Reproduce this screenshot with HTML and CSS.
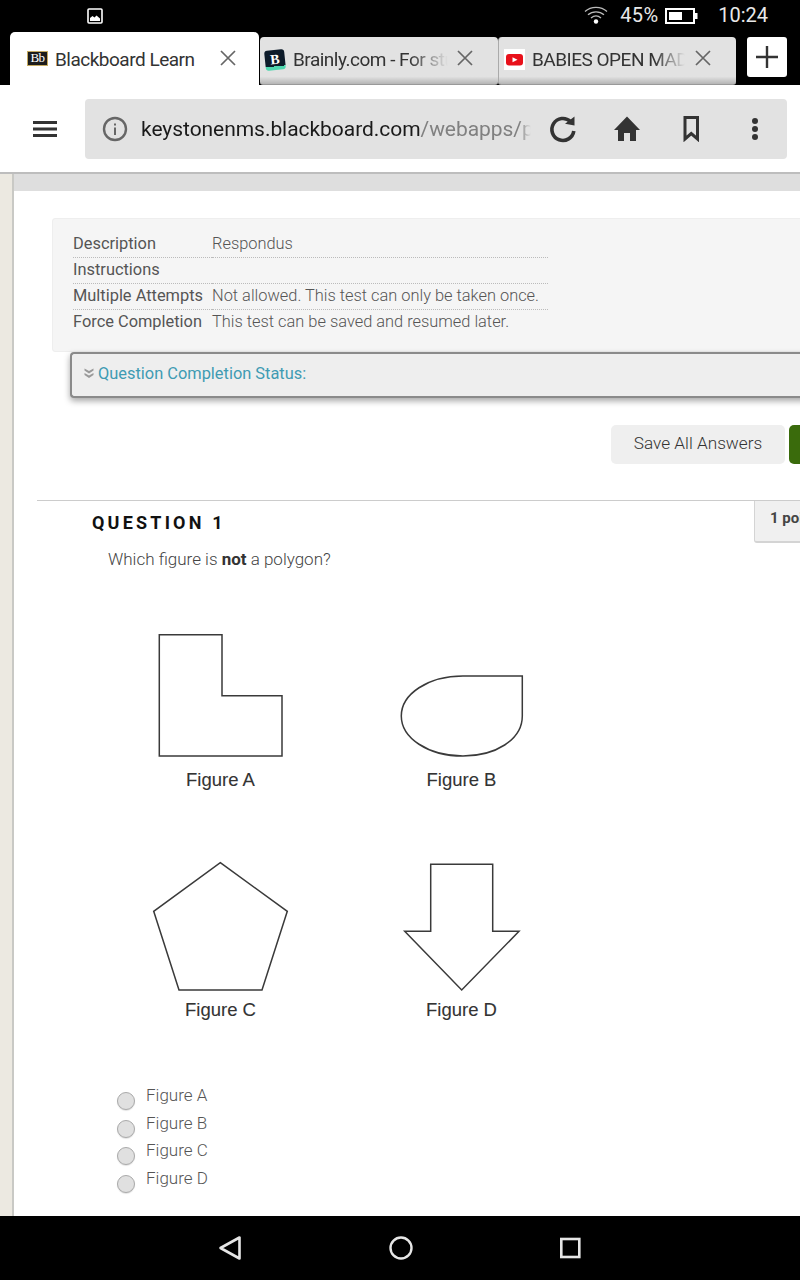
FILE: index.html
```html
<!DOCTYPE html>
<html lang="en">
<head>
<meta charset="utf-8">
<title>Blackboard Learn</title>
<link rel="stylesheet" href="styles.css">
</head>
<body>
<div class="screen">
  <header class="status">
    <svg class="status-img" width="16" height="16" viewBox="0 0 16 16"><rect x="1" y="1" width="14" height="14" rx="1" fill="none" stroke="#fff" stroke-width="1.6"/><path d="M3 13V10l2.500-2 2 1.500 2-2 3.500 3v2.500z" fill="#fff"/></svg>
    <svg class="status-wifi" width="24" height="20" viewBox="0 0 24 20" fill="none" stroke="#bbb" stroke-width="1.300"><path d="M1 6.500C7 1 17 1 23 6.500"/><path d="M4 9.800C8.500 5.800 15.500 5.800 20 9.800"/><path d="M7 13C10 10.500 14 10.500 17 13"/><circle cx="12" cy="16.500" r="2.200" fill="#fff" stroke="none"/></svg>
    <span class="status-pct">45%</span>
    <svg class="status-batt" width="33" height="16" viewBox="0 0 33 16"><rect x="1" y="1" width="28" height="14" fill="none" stroke="#fff" stroke-width="2"/><rect x="4" y="4" width="13" height="8" fill="#fff"/><rect x="30" y="5" width="2.500" height="6" fill="#fff"/></svg>
    <span class="status-time">10:24</span>
  </header>

  <nav class="tabs">
    <div class="tab tab-active">
      <span class="fav-bb">Bb</span>
      <span class="tab-title">Blackboard Learn</span>
      <svg class="tab-x" width="18" height="18" viewBox="0 0 18 18"><path d="M2 2l14 14M16 2L2 16" stroke="#666" stroke-width="1.700"/></svg>
    </div>
    <div class="tab tab-second">
      <span class="fav-br">B</span>
      <span class="tab-title tab-fade tab-fade-br">Brainly.com - For students</span>
      <svg class="tab-x" width="18" height="18" viewBox="0 0 18 18"><path d="M2 2l14 14M16 2L2 16" stroke="#666" stroke-width="1.700"/></svg>
    </div>
    <div class="tab tab-third">
      <svg class="fav-yt" width="21" height="21" viewBox="0 0 21 21"><rect width="21" height="21" fill="#fff"/><rect x="2" y="5" width="17" height="11.500" rx="3" fill="#e8101a"/><path d="M8.500 8.300l5 2.500-5 2.500z" fill="#fff"/></svg>
      <span class="tab-title tab-fade tab-fade-yt">BABIES OPEN MAD</span>
      <svg class="tab-x" width="18" height="18" viewBox="0 0 18 18"><path d="M2 2l14 14M16 2L2 16" stroke="#666" stroke-width="1.700"/></svg>
    </div>
    <div class="tab-new"><svg width="24" height="24" viewBox="0 0 24 24"><path d="M12 1v22M1 12h22" stroke="#333" stroke-width="2.400"/></svg></div>
  </nav>

  <div class="toolbar">
    <svg class="menu" width="24" height="16" viewBox="0 0 24 16"><path d="M0 1.500h24M0 8h24M0 14.500h24" stroke="#333" stroke-width="2.800"/></svg>
    <div class="urlbar">
      <svg class="info" width="26" height="26" viewBox="0 0 26 26"><circle cx="13" cy="13" r="11" fill="none" stroke="#666" stroke-width="2.400"/><rect x="12" y="11.500" width="2" height="7.500" fill="#666"/><rect x="12" y="7.500" width="2" height="2" fill="#666"/></svg>
      <div class="url"><span class="url-host">keystonenms.blackboard.com</span><span class="url-path">/webapps/portal</span></div>
      <svg class="reload" width="30" height="30" viewBox="0 0 30 30"><path d="M22.500 7.500A11 11 0 1 0 25.800 17" fill="none" stroke="#333" stroke-width="3.600"/><path d="M17 9.800L26.500 2.500V11.500z" fill="#333"/></svg>
      <svg class="home" width="26" height="26" viewBox="0 0 26 26"><path d="M13 0.500L26 14h-4v11h-6v-8h-6v8H4V14H0z" fill="#333"/></svg>
      <svg class="bookmark" width="18" height="26" viewBox="0 0 18 26"><path d="M2 1.500h12.500v21.500l-6.250-5.500-6.250 5.500z" fill="none" stroke="#333" stroke-width="3"/></svg>
      <svg class="dots" width="8" height="24" viewBox="0 0 8 24"><circle cx="4" cy="4" r="3" fill="#333"/><circle cx="4" cy="12" r="3" fill="#333"/><circle cx="4" cy="20" r="3" fill="#333"/></svg>
    </div>
  </div>

  <div class="page">
    <div class="strip"></div>
    <main class="main">
      <div class="band"></div>
      <section class="info-box">
        <div class="info-grid">
          <div class="k">Description</div><div class="v">Respondus</div>
          <div class="k">Instructions</div><div class="v"></div>
          <div class="k">Multiple Attempts</div><div class="v">Not allowed. This test can only be taken once.</div>
          <div class="k last">Force Completion</div><div class="v last">This test can be saved and resumed later.</div>
        </div>
      </section>
      <div class="completion">
        <svg class="chev" width="10" height="10" viewBox="0 0 10 10"><path d="M0.500 0.500l4.500 2.500 4.500-2.500v2l-4.500 3-4.500-3zM0.500 5l4.500 2.500 4.500-2.500v2l-4.500 3-4.500-3z" fill="#999"/></svg>
        <span>Question Completion Status:</span>
      </div>
      <div class="actions">
        <div class="btn-save">Save All Answers</div>
        <div class="btn-submit"></div>
      </div>
      <section class="question">
        <div class="q-head">
          <h2 class="q-title">QUESTION 1</h2>
          <div class="q-points">1 points</div>
        </div>
        <p class="q-text">Which figure is <b>not</b> a polygon?</p>
      </section>
      <svg class="figures" width="420" height="420" viewBox="130 620 420 420">
        <g fill="none" stroke="#3a3a3a" stroke-width="1.500">
          <path d="M159.300 634.700H222V695.700H282V756H159.300z"/>
          <path d="M463 676H522.300V716C522.300 740 495 756 463 756C428 756 401.300 738 401.300 716C401.300 694 428 676 463 676z"/>
          <path d="M220.300 862.700L287.300 911.300L262 990H179L153.700 911.300z"/>
          <path d="M430.700 864.300H492.700V931.300H519L461.700 990L404.700 931.300H430.700z"/>
        </g>
        <g class="fig-label" text-anchor="middle">
          <text x="220.500" y="786">Figure A</text>
          <text x="461.500" y="786">Figure B</text>
          <text x="220.500" y="1016">Figure C</text>
          <text x="461.500" y="1016">Figure D</text>
        </g>
      </svg>
      <ul class="answers">
        <li><span class="radio"></span><span class="a-text">Figure A</span></li>
        <li><span class="radio"></span><span class="a-text">Figure B</span></li>
        <li><span class="radio"></span><span class="a-text">Figure C</span></li>
        <li><span class="radio"></span><span class="a-text">Figure D</span></li>
      </ul>
    </main>
  </div>

  <footer class="navbar">
    <svg width="24" height="26" viewBox="0 0 24 26"><path d="M21.500 2.500V23.500L2.500 13z" fill="none" stroke="#e6e6e6" stroke-width="2.600" stroke-linejoin="round"/></svg>
    <svg width="26" height="26" viewBox="0 0 26 26"><circle cx="13" cy="13" r="10.500" fill="none" stroke="#e6e6e6" stroke-width="2.400"/></svg>
    <svg width="24" height="24" viewBox="0 0 24 24"><rect x="1.300" y="3" width="18" height="18" fill="none" stroke="#e6e6e6" stroke-width="2.600"/></svg>
  </footer>
</div>
</body>
</html>
```
FILE: styles.css
```css
* { box-sizing: border-box; }
html, body { margin: 0; padding: 0; }
body { background: #fff; font-family: Roboto, "Liberation Sans", sans-serif; color: #555; }
.screen { width: 800px; height: 1280px; overflow: hidden; display: flex; flex-direction: column; }

.status { height: 32px; padding-bottom: 2px; background: #000; display: flex; align-items: center; color: #e8e8e8; font-size: 20px; flex: none; }
.status-img { margin-left: 87px; margin-top: 2px; }
.status-wifi { margin-left: auto; margin-right: 12px; }
.status-pct { width: 45px; letter-spacing: 0.4px; }
.status-batt { margin-right: 20px; margin-top: 1px; }
.status-time { margin-right: 32px; }

.tabs { height: 53px; background: #000; display: flex; align-items: flex-start; padding-left: 10px; flex: none; }
.tab { display: flex; align-items: center; font-size: 19px; letter-spacing: -0.500px; color: #333; white-space: nowrap; }
.tab-active { width: 249px; height: 53px; padding-top: 1px; background: #fff; border-radius: 5px 5px 0 0; margin-right: 1px; padding-left: 17px; }
.tab-second, .tab-third { width: 238px; height: 48px; padding-bottom: 2px; margin-top: 5px; background: linear-gradient(#e2e2e2 84%, #b5b5b5 100%); border-radius: 4px 4px 3px 3px; border-bottom: 1px solid #999; }
.tab-second { padding-left: 5px; }
.tab-third { padding-left: 5px; border-left: 1px solid #aaa; }
.tab-title { overflow: hidden; flex: none; }
.tab-active .tab-title { width: 150px; margin-left: 7px; }
.tab-x { flex: none; }
.tab-active .tab-x { margin-left: 14px; margin-top: -3px; }
.tab-fade-br { width: 155px; margin-left: 8px; mask-image: linear-gradient(to right, #000 75%, transparent 100%); }
.tab-second .tab-x { margin-left: 8px; margin-top: -3px; }
.tab-fade-yt { width: 153px; margin-left: 7px; mask-image: linear-gradient(to right, #000 80%, transparent 100%); }
.tab-third .tab-x { margin-left: 9px; margin-top: -3px; }
.tab-new { width: 40px; height: 40px; margin-left: 11px; margin-top: 5px; background: #fff; border-radius: 3px; display: flex; align-items: center; justify-content: center; }

.fav-bb { width: 21px; height: 15px; flex: none; background: #1c1c1c; border: 1px solid #c5aa60; color: #fff; font-family: "Liberation Serif", serif; font-size: 13px; line-height: 12px; text-align: center; letter-spacing: -0.5px; margin-top: -2px; }
.fav-br { width: 20px; height: 20px; flex: none; background: linear-gradient(#0d1b2a 82%, #4fd6ae 82%); border-radius: 3px; color: #fff; font-family: "Liberation Serif", serif; font-weight: bold; font-size: 14px; line-height: 19px; text-align: center; letter-spacing: 0; transform: rotate(-6deg); }
.fav-yt { flex: none; }

.toolbar { height: 89px; flex: none; background: #fff; border-bottom: 2px solid #bdbdbd; display: flex; align-items: flex-start; padding: 14px 0 0 33px; }
.menu { margin: 22px 28px 0 0; flex: none; }
.urlbar { width: 702px; height: 60px; background: #e2e2e2; border-radius: 4px; display: flex; align-items: center; padding-left: 17px; flex: none; }
.info { flex: none; }
.url { width: 390px; margin-left: 13px; overflow: hidden; white-space: nowrap; font-size: 21px; letter-spacing: -0.050px; flex: none; mask-image: linear-gradient(to right, #000 97%, transparent 100%); }
.url-host { color: #1a1a1a; }
.url-path { color: #808080; }
.reload { margin-left: 17px; flex: none; }
.home { margin-left: 36px; flex: none; }
.bookmark { margin-left: 43px; flex: none; }
.dots { margin-left: 50px; flex: none; }

.page { flex: 1; display: flex; min-height: 0; }
.strip { width: 14px; flex: none; background: #ece9e1; border-right: 2px solid #c9c9c5; }
.main { flex: 1; min-width: 0; overflow: hidden; }
.band { height: 17px; background: #dedede; }

.info-box { margin: 27px 0 0 38px; width: 760px; height: 134px; background: #f5f5f5; border: 1px solid #eee; border-radius: 3px; padding: 13px 0 0 20px; }
.info-grid { display: grid; grid-template-columns: 139px 336px; grid-auto-rows: 26px; font-size: 16.400px; line-height: 23px; }
.k, .v { border-bottom: 1px dotted #bbb; white-space: nowrap; }
.k.last, .v.last { border-bottom: 0; }
.k { color: #555; }
.v { font-weight: 300; color: #555; }

.completion { margin-left: 56px; width: 760px; height: 46px; padding-bottom: 4px; background: #eee; border: 2px solid #8a8a8a; border-right: 0; border-radius: 4px 0 0 4px; box-shadow: 0 3px 6px rgba(0, 0, 0, 0.35); display: flex; align-items: center; padding-left: 12px; font-size: 16.400px; color: #3f9bb3; position: relative; }
.chev { margin-right: 4px; flex: none; }

.actions { margin: 27px 0 0 597px; display: flex; gap: 4px; }
.btn-save { width: 174px; height: 39px; flex: none; background: #efefef; border-radius: 5px; font-size: 17.200px; font-weight: 300; color: #333; line-height: 36px; text-align: center; }
.btn-submit { width: 40px; height: 39px; flex: none; background: #3a6b0c; border-radius: 5px 0 0 5px; }

.question { margin: 36px 0 0 23px; border-top: 1px solid #ccc; width: 763px; }
.q-head { display: flex; align-items: flex-start; }
.q-title { margin: 11px 0 0 55px; font-size: 18px; font-weight: 700; letter-spacing: 3.200px; line-height: 22px; color: #111; flex: 1; }
.q-points { width: 46px; height: 42px; flex: none; overflow: hidden; white-space: nowrap; background: #f0f0f0; border: 1px solid #d4d4d4; border-width: 0 0 2px 1px; border-radius: 0 0 0 3px; padding: 8px 0 0 15px; font-size: 15px; font-weight: 700; color: #444; }
.q-text { margin: 5px 0 0 71px; font-size: 17px; font-weight: 300; line-height: 22px; color: #444; }
.q-text b { font-weight: 700; color: #333; }

.figures { display: block; margin: 50px 0 0 116px; }
.fig-label text { font-family: "Liberation Sans", Arial, sans-serif; font-size: 18.500px; fill: #333; stroke: #333; stroke-width: 0.100px; }

.answers { list-style: none; margin: 44px 0 0 103px; padding: 0; }
.answers li { height: 27.600px; display: flex; align-items: flex-start; }
.radio { width: 18px; height: 18px; margin-top: 8px; border-radius: 50%; background: #e0e0e0; border: 1px solid #aaa; box-shadow: 0 1px 1px rgba(0, 0, 0, 0.12); flex: none; }
.a-text { margin-left: 11px; font-size: 17px; font-weight: 300; line-height: 22px; color: #555; }

.navbar { height: 64px; flex: none; background: #000; display: flex; align-items: center; padding: 0 0 0 218px; gap: 146px; }
```
